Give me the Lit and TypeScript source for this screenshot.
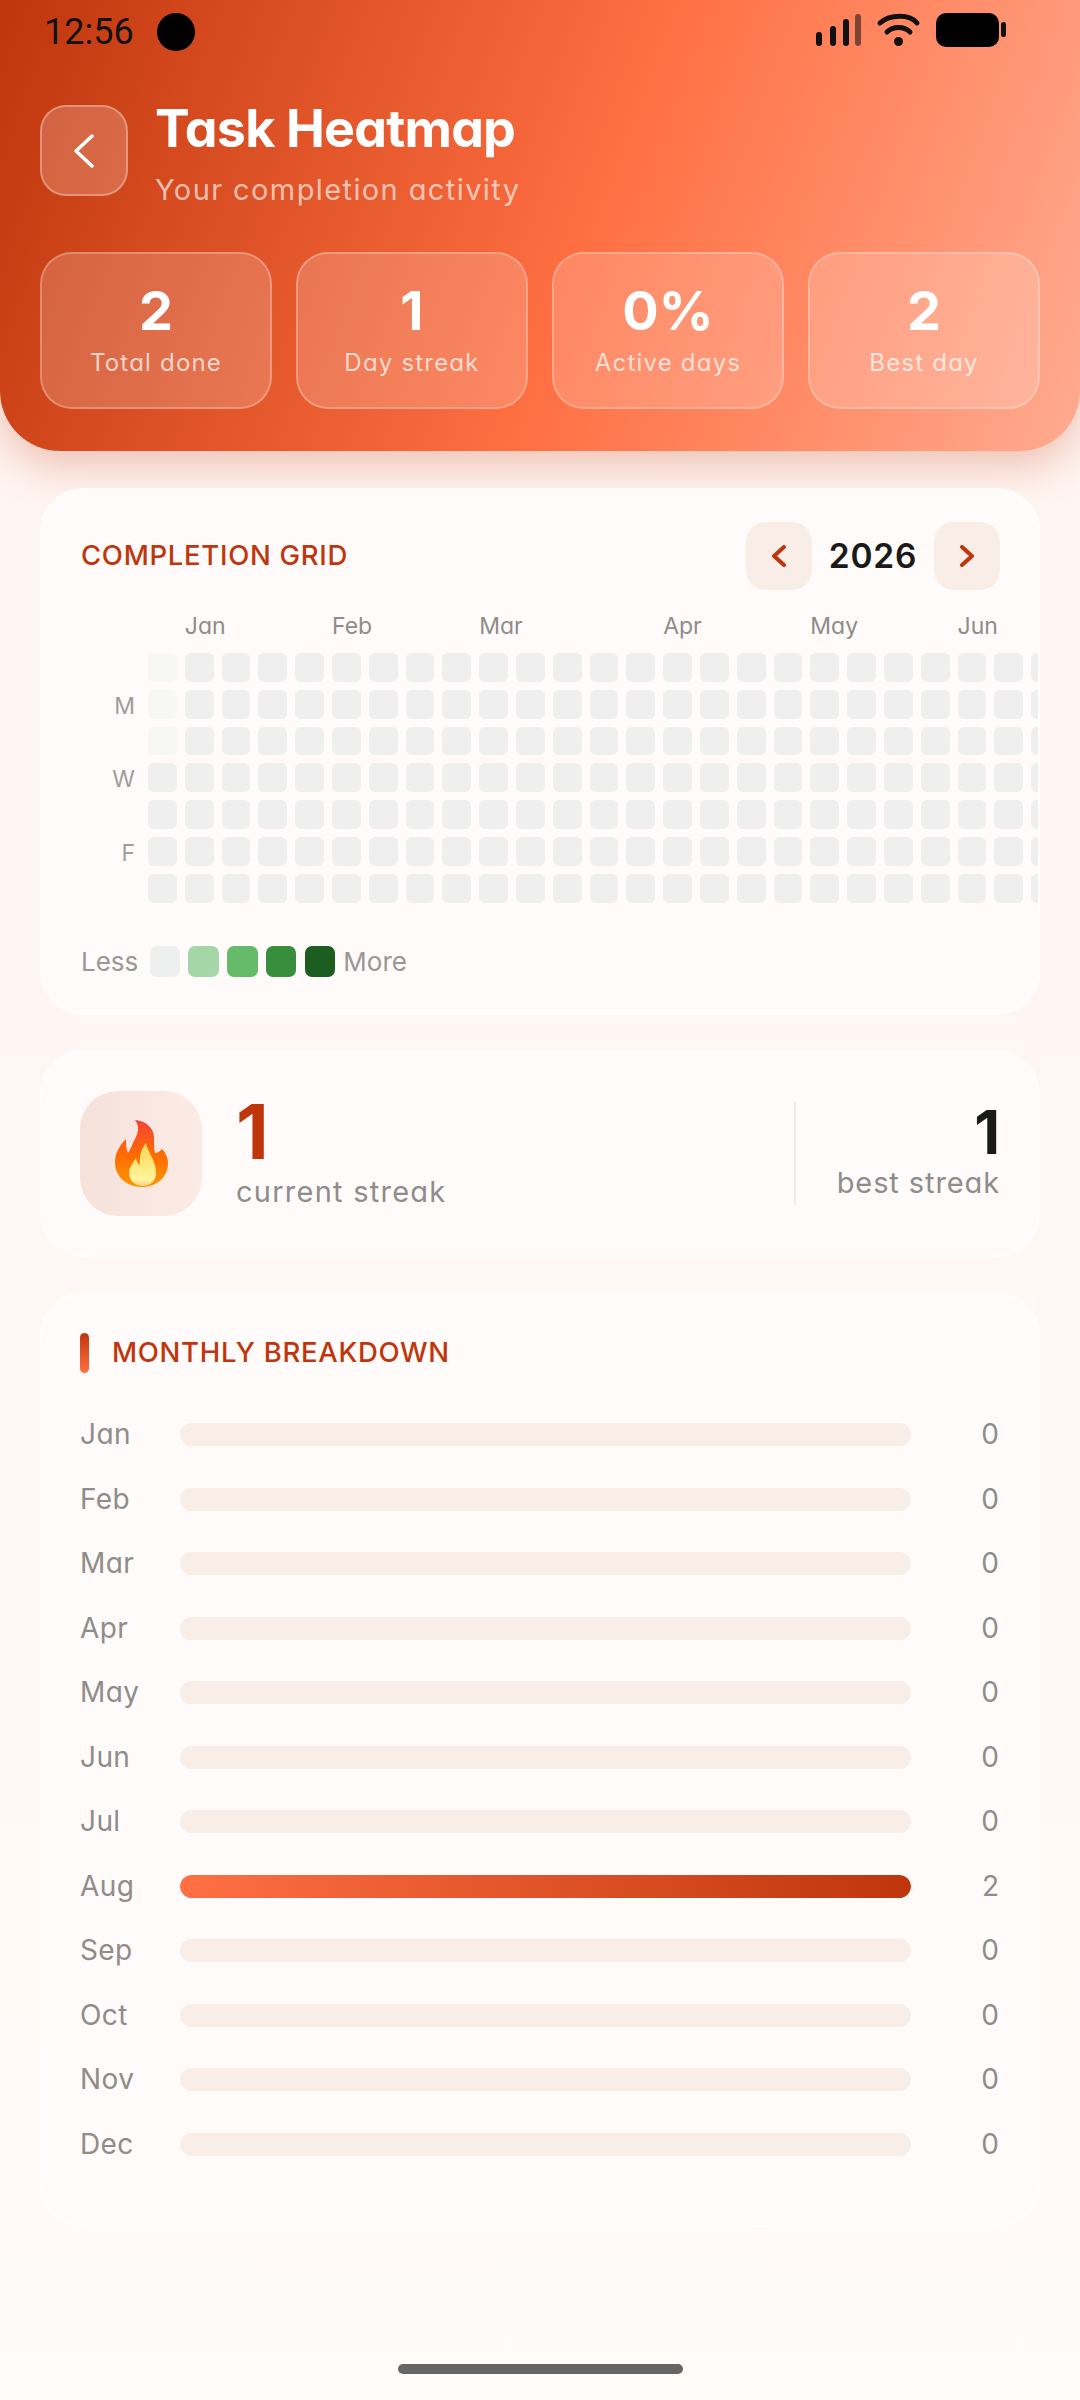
import { LitElement, html, css, nothing } from "lit";
import { customElement } from "lit/decorators.js";

const MONTHS = ["Jan", "Feb", "Mar", "Apr", "May", "Jun", "Jul", "Aug", "Sep", "Oct", "Nov", "Dec"];
const COUNTS = [0, 0, 0, 0, 0, 0, 0, 2, 0, 0, 0, 0];
const STATS = [
  ["2", "Total done"],
  ["1", "Day streak"],
  ["0%", "Active days"],
  ["2", "Best day"],
];
const MONTH_COLS: [string, number][] = [
  ["Jan", 2],
  ["Feb", 6],
  ["Mar", 10],
  ["Apr", 15],
  ["May", 19],
  ["Jun", 23],
];
const DAY_LABELS = ["", "M", "", "W", "", "F", ""];
const LEGEND = ["#eeefef", "#a5d6a7", "#66bb6a", "#388e3c", "#1b5e20"];

@customElement("app-root")
export class AppRoot extends LitElement {
  static styles = css`
    :host {
      display: block;
      position: relative;
      width: 1080px;
      height: 2400px;
      overflow: hidden;
      background: linear-gradient(180deg, #fff3ef 0%, #fffbf8 100%);
      font-family: Inter, "Noto Sans", sans-serif;
      font-feature-settings: "cv11";
      color: #8f8c8a;
    }

    .header {
      height: 451px;
      box-sizing: border-box;
      padding: 0 40px;
      background: linear-gradient(110deg, #bf360c 0%, #ff7043 55%, #ffab91 100%);
      border-radius: 0 0 60px 60px;
      box-shadow: 0 14px 44px rgba(191, 54, 12, 0.28);
    }

    .status {
      height: 64px;
      display: flex;
      align-items: center;
      font-family: Roboto, sans-serif;
      font-size: 36px;
      color: #111;
      padding-left: 4px;
      box-sizing: border-box;
    }
    .time {
      width: 113px;
    }
    .camera {
      width: 38px;
      height: 38px;
      border-radius: 50%;
      background: #000;
    }
    .status svg {
      margin-left: auto;
      margin-right: 28px;
      display: block;
    }

    .top {
      display: flex;
      gap: 27px;
      height: 91px;
      margin-top: 41px;
    }
    .back {
      width: 88px;
      height: 91px;
      box-sizing: border-box;
      border-radius: 26px;
      background: rgba(255, 255, 255, 0.2);
      border: 2px solid rgba(255, 255, 255, 0.3);
      display: flex;
      align-items: center;
      justify-content: center;
    }
    .title {
      font-size: 52px;
      font-weight: 700;
      letter-spacing: -0.8px;
      color: #fff;
      line-height: 58px;
      margin-top: -5px;
      white-space: nowrap;
    }
    .sub {
      font-size: 29px;
      line-height: 36px;
      margin-top: 14px;
      color: rgba(255, 255, 255, 0.65);
      letter-spacing: 1.4px;
      white-space: nowrap;
    }

    .stats {
      display: grid;
      grid-template-columns: repeat(4, 1fr);
      gap: 24px;
      margin-top: 56px;
    }
    .stat {
      height: 157px;
      box-sizing: border-box;
      border-radius: 32px;
      background: rgba(255, 255, 255, 0.18);
      border: 2px solid rgba(255, 255, 255, 0.25);
      display: flex;
      flex-direction: column;
      align-items: center;
      padding-top: 26px;
    }
    .stat b {
      font-size: 54px;
      line-height: 62px;
      font-weight: 700;
      color: #fff;
    }
    .stat span {
      font-size: 24px;
      line-height: 32px;
      margin-top: 5px;
      letter-spacing: 1.2px;
      color: rgba(255, 255, 255, 0.72);
      white-space: nowrap;
    }

    .content {
      display: flex;
      flex-direction: column;
      gap: 35px;
      padding: 37px 40px 0;
    }
    .card {
      box-sizing: border-box;
      border-radius: 44px;
      border: 2px solid rgba(255, 255, 255, 0.75);
      background: #fffbfa;
      overflow: hidden;
    }

    .grid-card {
      padding: 32px 38px 36px 39px;
    }
    .grid-head {
      display: flex;
      align-items: center;
      justify-content: space-between;
      height: 68px;
    }
    .heading {
      font-size: 27.5px;
      font-weight: 550;
      letter-spacing: 0.7px;
      line-height: 32px;
      margin-top: -2px;
      color: #bf360c;
      white-space: nowrap;
    }
    .year-nav {
      display: flex;
      align-items: center;
    }
    .nav-btn {
      width: 66px;
      height: 68px;
      border-radius: 20px;
      background: #f9ede8;
      display: flex;
      align-items: center;
      justify-content: center;
    }
    .year {
      width: 122px;
      text-align: center;
      font-size: 33.5px;
      font-weight: 600;
      letter-spacing: 0.8px;
      color: #1a1a1a;
    }

    .heat {
      display: flex;
      gap: 13px;
      margin-top: 20px;
    }
    .days {
      width: 54px;
      flex: none;
      display: grid;
      grid-template-rows: repeat(7, 28.8px);
      row-gap: 8px;
      margin-top: 43px;
      text-align: right;
      font-size: 23px;
      line-height: 32.8px;
      color: #a09d9b;
    }
    .weeks {
      flex: none;
    }
    .month-row,
    .cells {
      display: grid;
      grid-template-columns: repeat(53, 28.8px);
      column-gap: 8px;
    }
    .month-row {
      height: 43px;
      font-size: 23px;
      line-height: 33px;
      white-space: nowrap;
    }
    .cells {
      grid-template-rows: repeat(7, 28.8px);
      grid-auto-flow: column;
      row-gap: 8px;
    }
    .cell {
      border-radius: 6px;
      background: #efefef;
    }
    .cell.empty {
      background: #f7f7f6;
    }

    .legend {
      display: flex;
      align-items: center;
      gap: 8.25px;
      margin-top: 43px;
      height: 31px;
      font-size: 26px;
      color: #9a9795;
    }
    .legend i {
      width: 30.5px;
      height: 31px;
      border-radius: 7px;
    }
    .legend .less {
      margin-right: 3px;
    }

    .streak-card {
      height: 207px;
      padding: 0 38px 0 38px;
      display: flex;
      align-items: center;
    }
    .fire {
      width: 122px;
      height: 125px;
      flex: none;
      border-radius: 38px;
      background: linear-gradient(90deg, #f6e1db, #fcebe5);
      display: flex;
      align-items: center;
      justify-content: center;
    }
    .current {
      margin-left: 34px;
      margin-top: -3px;
    }
    .current b {
      display: block;
      font-size: 76px;
      line-height: 76px;
      margin-bottom: 4px;
      font-weight: 700;
      color: #bf360c;
    }
    .streak-label {
      font-size: 29px;
      line-height: 38px;
      letter-spacing: 1.25px;
      white-space: nowrap;
    }
    .divider {
      width: 2px;
      height: 103px;
      margin-left: auto;
      background: #efeae8;
    }
    .best {
      margin-left: 41px;
      margin-top: -5px;
      text-align: right;
    }
    .best .streak-label {
      letter-spacing: 0.9px;
    }
    .best b {
      display: block;
      font-size: 60px;
      line-height: 64px;
      font-weight: 700;
      color: #1a1a1a;
    }

    .monthly {
      padding: 39px 40px 48px 38px;
    }
    .monthly-head {
      display: flex;
      align-items: center;
      gap: 23px;
      height: 40px;
      margin-bottom: 30px;
    }
    .accent {
      width: 9px;
      height: 40px;
      border-radius: 5px;
      background: linear-gradient(180deg, #bf360c, #ff7043);
    }
    .row {
      display: grid;
      grid-template-columns: 100px 1fr 87px;
      align-items: center;
      height: 64.5px;
      font-size: 28px;
      letter-spacing: 0.4px;
      line-height: 32px;
    }
    .row span {
      margin-top: -1px;
    }
    .bar {
      height: 23px;
      border-radius: 12px;
      background: #f9ede8;
      overflow: hidden;
    }
    .fill {
      height: 100%;
      border-radius: 12px;
      background: linear-gradient(90deg, #ff7043, #bf360c);
    }
    .value {
      text-align: right;
      letter-spacing: 0;
      margin-right: -1px;
    }

    .home {
      position: absolute;
      left: 398px;
      bottom: 26px;
      width: 285px;
      height: 10px;
      border-radius: 5px;
      background: #666;
    }
  `;

  renderStatusIcons() {
    return html`<svg width="196" height="40" viewBox="0 0 196 40">
      <g fill="#111">
        <rect x="0" y="20" width="6" height="14" rx="3"></rect>
        <rect x="14" y="14" width="6" height="20" rx="3"></rect>
        <rect x="27" y="7" width="6" height="27" rx="3"></rect>
        <rect x="39" y="2" width="6" height="32" rx="3" fill="#111" opacity="0.55"></rect>
      </g>
      <g fill="none" stroke="#111" stroke-width="5" stroke-linecap="round">
        <path d="M64 11 C74 2 94 2 101 11"></path>
        <path d="M71 20 C77 14 88 14 94 20"></path>
      </g>
      <circle cx="82.5" cy="29.5" r="4.5" fill="#111"></circle>
      <rect x="120" y="1" width="63" height="34" rx="10" fill="#000"></rect>
      <rect x="185" y="10" width="5" height="15" rx="2.5" fill="#111"></rect>
    </svg>`;
  }

  renderChevron(dir: "left" | "right", color: string, w: number, h: number, stroke: number) {
    const d = dir === "left" ? `M${w - 2} 2 L2 ${h / 2} L${w - 2} ${h - 2}` : `M2 2 L${w - 2} ${h / 2} L2 ${h - 2}`;
    return html`<svg width=${w} height=${h} viewBox="0 0 ${w} ${h}">
      <path d=${d} fill="none" stroke=${color} stroke-width=${stroke} stroke-linecap="round" stroke-linejoin="round"></path>
    </svg>`;
  }

  renderFlame() {
    return html`<svg width="53" height="67" viewBox="0 0 53 67">
      <defs>
        <linearGradient id="outer" x1="0" y1="0" x2="0" y2="1">
          <stop offset="0" stop-color="#f44336"></stop>
          <stop offset="0.55" stop-color="#ff6d00"></stop>
          <stop offset="1" stop-color="#ff9800"></stop>
        </linearGradient>
        <linearGradient id="inner" x1="0" y1="0" x2="0" y2="1">
          <stop offset="0" stop-color="#ffd54f"></stop>
          <stop offset="0.85" stop-color="#fff59d"></stop>
          <stop offset="1" stop-color="#ffcc80"></stop>
        </linearGradient>
      </defs>
      <path
        fill="url(#outer)"
        d="M20 0C31 1 40 8 39 20C39 25 39 29 40 33C43 33 45 31 47 29C51 33 53 38 53 43C53 57 42 67 27 67C12 67 0 57 0 42C0 33 5 25 11 19C11 24 11 29 13 33C16 29 17 24 20 19C23 13 25 7 20 0Z"
      ></path>
      <path
        fill="url(#inner)"
        d="M31 23C33 33 41 40 41 53C41 61 35 66 28 66C20 66 14 60 14 53C14 47 18 43 21 38C22 42 23 44 25 45C24 37 26 29 31 23Z"
      ></path>
    </svg>`;
  }

  render() {
    const cells = Array.from({ length: 53 * 7 }, (_, i) => i);
    return html`
      <div class="header">
        <div class="status">
          <span class="time">12:56</span>
          <span class="camera"></span>
          ${this.renderStatusIcons()}
        </div>
        <div class="top">
          <div class="back">${this.renderChevron("left", "#fff", 20, 34, 3.5)}</div>
          <div>
            <div class="title">Task Heatmap</div>
            <div class="sub">Your completion activity</div>
          </div>
        </div>
        <div class="stats">
          ${STATS.map(([v, l]) => html`<div class="stat"><b>${v}</b><span>${l}</span></div>`)}
        </div>
      </div>

      <div class="content">
        <div class="card grid-card">
          <div class="grid-head">
            <div class="heading">COMPLETION GRID</div>
            <div class="year-nav">
              <div class="nav-btn">${this.renderChevron("left", "#bf360c", 14, 22, 4)}</div>
              <div class="year">2026</div>
              <div class="nav-btn">${this.renderChevron("right", "#bf360c", 14, 22, 4)}</div>
            </div>
          </div>
          <div class="heat">
            <div class="days">${DAY_LABELS.map((d) => html`<span>${d || nothing}</span>`)}</div>
            <div class="weeks">
              <div class="month-row">
                ${MONTH_COLS.map(([m, c]) => html`<span style="grid-column: ${c}">${m}</span>`)}
              </div>
              <div class="cells">
                ${cells.map((i) => html`<div class="cell ${i < 3 ? "empty" : ""}"></div>`)}
              </div>
            </div>
          </div>
          <div class="legend">
            <span class="less">Less</span>
            ${LEGEND.map((c) => html`<i style="background: ${c}"></i>`)}
            <span>More</span>
          </div>
        </div>

        <div class="card streak-card">
          <div class="fire">${this.renderFlame()}</div>
          <div class="current">
            <b>1</b>
            <div class="streak-label">current streak</div>
          </div>
          <div class="divider"></div>
          <div class="best">
            <b>1</b>
            <div class="streak-label">best streak</div>
          </div>
        </div>

        <div class="card monthly">
          <div class="monthly-head">
            <div class="accent"></div>
            <div class="heading">MONTHLY BREAKDOWN</div>
          </div>
          ${MONTHS.map(
            (m, i) => html`<div class="row">
              <span>${m}</span>
              <div class="bar">
                ${COUNTS[i] > 0 ? html`<div class="fill" style="width: ${(COUNTS[i] / 2) * 100}%"></div>` : nothing}
              </div>
              <span class="value">${COUNTS[i]}</span>
            </div>`
          )}
        </div>
      </div>
      <div class="home"></div>
    `;
  }
}
